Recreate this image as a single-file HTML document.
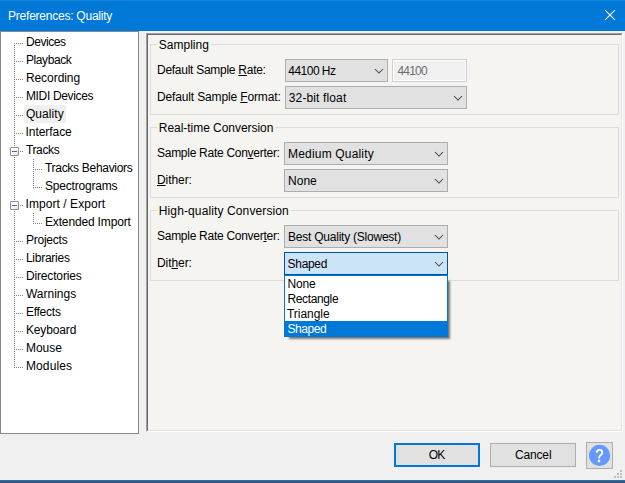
<!DOCTYPE html>
<html>
<head>
<meta charset="utf-8">
<title>Preferences: Quality</title>
<style>
*{box-sizing:border-box;margin:0;padding:0}
html,body{width:625px;height:483px;overflow:hidden;background:#f0f0f0}
body{font-family:"Liberation Sans",sans-serif;font-size:12px;color:#000;position:relative}
.abs{position:absolute}
.t{position:absolute;white-space:nowrap;line-height:16px;height:16px;font-size:12px}
.t u{text-decoration:underline;text-underline-offset:1px}
#title{left:0;top:0;width:625px;height:31px;background:#0078d7}
#tree{left:0;top:31px;width:139px;height:403px;background:#fff;border:1px solid #828790}
#panel{left:146px;top:33px;width:477px;height:399px;background:#f5f4f1;border-top:1px solid #a0a0a0;border-left:1px solid #a0a0a0;border-right:1px solid #fff;border-bottom:1px solid #fff}
#panel:before{content:"";position:absolute;left:0;top:0;right:0;bottom:0;border-top:1px solid #696969;border-left:1px solid #696969;border-right:1px solid #e3e3e3;border-bottom:1px solid #e3e3e3}
.gb{position:absolute;border:1px solid #dcdcdc}
.gbl{position:absolute;background:#f5f4f1;height:5px}
.combo{position:absolute;height:23px;background:#e1e1e1;border:1px solid #adadad}
.combo.act{background:#cce4f7;border-color:#005499}
.chev{position:absolute;right:3px;top:8px}
.btn{position:absolute;background:#e1e1e1;border:1px solid #adadad}
.hd{position:absolute;height:1px;background-image:linear-gradient(to right,#808080 50%,transparent 50%);background-size:2px 1px}
.vd{position:absolute;width:1px;background-image:linear-gradient(to bottom,#808080 50%,transparent 50%);background-size:1px 2px}
.exp{position:absolute;width:9px;height:9px;border:1px solid #919191;background:linear-gradient(135deg,#fff 45%,#dcdcdc);border-radius:1px}
.exp:after{content:"";position:absolute;left:1px;top:3px;width:5px;height:1px;background:#4a62c4}
.grip{position:absolute;width:2px;height:2px;background:#bfbfbf}
</style>
</head>
<body>
<div id="title" class="abs"></div><div class="abs" style="left:0;top:0;width:625px;height:1px;background:#1a84da"></div>
<svg class="abs" style="left:604px;top:9px" width="12" height="12" viewBox="0 0 12 12"><path d="M1.1 1.1 L10.9 10.9 M10.9 1.1 L1.1 10.9" stroke="#fff" stroke-width="1.1" fill="none"/></svg>

<div id="tree" class="abs"></div>
<div class="abs" style="left:24px;top:105px;width:42px;height:18px;background:#f0f0f0"></div>
<div class="vd" style="left:14px;top:43px;height:325px"></div><div class="hd" style="left:16px;top:43px;width:7px"></div><div class="hd" style="left:16px;top:61px;width:7px"></div><div class="hd" style="left:16px;top:79px;width:7px"></div><div class="hd" style="left:16px;top:97px;width:7px"></div><div class="hd" style="left:16px;top:115px;width:7px"></div><div class="hd" style="left:16px;top:133px;width:7px"></div><div class="hd" style="left:16px;top:241px;width:7px"></div><div class="hd" style="left:16px;top:259px;width:7px"></div><div class="hd" style="left:16px;top:277px;width:7px"></div><div class="hd" style="left:16px;top:295px;width:7px"></div><div class="hd" style="left:16px;top:313px;width:7px"></div><div class="hd" style="left:16px;top:331px;width:7px"></div><div class="hd" style="left:16px;top:349px;width:7px"></div><div class="hd" style="left:16px;top:367px;width:7px"></div><div class="hd" style="left:20px;top:151px;width:3px"></div><div class="hd" style="left:20px;top:205px;width:3px"></div><div class="vd" style="left:33px;top:159px;height:29px"></div><div class="hd" style="left:35px;top:169px;width:7px"></div><div class="hd" style="left:35px;top:187px;width:7px"></div><div class="vd" style="left:33px;top:213px;height:11px"></div><div class="hd" style="left:35px;top:223px;width:7px"></div>
<div class="exp" style="left:10px;top:147px"></div><div class="exp" style="left:10px;top:201px"></div>

<div id="panel" class="abs"></div>
<div class="gb" style="left:150px;top:44px;width:469px;height:71px"></div><div class="gbl" style="left:157px;top:42px;width:54px"></div>
<div class="gb" style="left:150px;top:127px;width:469px;height:71px"></div><div class="gbl" style="left:157px;top:125px;width:118px"></div>
<div class="gb" style="left:150px;top:210px;width:469px;height:71px"></div><div class="gbl" style="left:157px;top:208px;width:134px"></div>

<div class="combo " style="left:285px;top:59px;width:103px"><svg class="chev" width="10" height="7" viewBox="0 0 10 7"><path d="M1 1 L5 5 L9 1" stroke="#444" stroke-width="1.05" fill="none"/></svg></div>
<div class="abs" style="left:392px;top:59px;width:75px;height:23px;background:#f0f0f0;border:1px solid #d0d0d0;box-shadow:inset 0 0 0 1px #fff"></div>
<div class="combo " style="left:285px;top:86px;width:182px"><svg class="chev" width="10" height="7" viewBox="0 0 10 7"><path d="M1 1 L5 5 L9 1" stroke="#444" stroke-width="1.05" fill="none"/></svg></div>
<div class="combo " style="left:284px;top:142px;width:164px"><svg class="chev" width="10" height="7" viewBox="0 0 10 7"><path d="M1 1 L5 5 L9 1" stroke="#444" stroke-width="1.05" fill="none"/></svg></div>
<div class="combo " style="left:284px;top:169px;width:164px"><svg class="chev" width="10" height="7" viewBox="0 0 10 7"><path d="M1 1 L5 5 L9 1" stroke="#444" stroke-width="1.05" fill="none"/></svg></div>
<div class="combo " style="left:284px;top:225px;width:164px"><svg class="chev" width="10" height="7" viewBox="0 0 10 7"><path d="M1 1 L5 5 L9 1" stroke="#444" stroke-width="1.05" fill="none"/></svg></div>
<div class="combo act" style="left:284px;top:252px;width:164px"><svg class="chev" width="10" height="7" viewBox="0 0 10 7"><path d="M1 1 L5 5 L9 1" stroke="#444" stroke-width="1.05" fill="none"/></svg></div>

<!-- dropdown list -->
<div class="abs" style="left:290px;top:282px;width:159px;height:56px;background:rgba(0,0,0,.5);box-shadow:0 0 2px 1px rgba(0,0,0,.5)"></div>
<div class="abs" style="left:284px;top:275px;width:164px;height:62px;background:#fff;border:1px solid #0078d7"></div>
<div class="abs" style="left:285px;top:321px;width:162px;height:15px;background:#0078d7"></div>

<!-- buttons -->
<div class="btn" style="left:394px;top:443px;width:86px;height:24px;border:2px solid #0078d7"></div>
<div class="btn" style="left:490px;top:443px;width:86px;height:24px"></div>
<div class="btn" style="left:586px;top:442px;width:27px;height:27px"></div>
<svg class="abs" style="left:586px;top:442px" width="27" height="27" viewBox="586 442 27 27"><circle cx="599.6" cy="455.4" r="10.6" fill="#6699ff"/><path d="M596.7 452.8 C596.7 450.6 598.2 449.9 599.6 449.9 C601.2 449.9 602.3 450.9 602.3 452.4 C602.3 453.8 601.4 454.5 600.4 455.4 C599.4 456.3 599 456.9 599 458.6" stroke="#fff" stroke-width="1.9" fill="none"/><rect x="597.8" y="459.7" width="2.4" height="2.5" fill="#fff"/></svg>

<div class="t" style="left:8.10px;top:8px;letter-spacing:-0.238px;color:#fff">Preferences: Quality</div>
<div class="t" style="left:25.90px;top:34px;letter-spacing:-0.413px">Devices</div>
<div class="t" style="left:25.90px;top:52px;letter-spacing:-0.399px">Playback</div>
<div class="t" style="left:25.90px;top:70px;letter-spacing:-0.053px">Recording</div>
<div class="t" style="left:25.90px;top:88px;letter-spacing:-0.331px">MIDI Devices</div>
<div class="t" style="left:25.90px;top:106px;letter-spacing:0.092px">Quality</div>
<div class="t" style="left:25.60px;top:124px;letter-spacing:-0.065px">Interface</div>
<div class="t" style="left:25.90px;top:142px;letter-spacing:-0.331px">Tracks</div>
<div class="t" style="left:45.00px;top:160px;letter-spacing:-0.297px">Tracks Behaviors</div>
<div class="t" style="left:45.00px;top:178px;letter-spacing:-0.190px">Spectrograms</div>
<div class="t" style="left:25.60px;top:196px;letter-spacing:0.053px">Import / Export</div>
<div class="t" style="left:45.00px;top:214px;letter-spacing:-0.158px">Extended Import</div>
<div class="t" style="left:25.90px;top:232px;letter-spacing:-0.221px">Projects</div>
<div class="t" style="left:25.90px;top:250px;letter-spacing:-0.252px">Libraries</div>
<div class="t" style="left:25.90px;top:268px;letter-spacing:-0.145px">Directories</div>
<div class="t" style="left:25.90px;top:286px;letter-spacing:0.009px">Warnings</div>
<div class="t" style="left:25.90px;top:304px;letter-spacing:-0.244px">Effects</div>
<div class="t" style="left:25.90px;top:322px;letter-spacing:-0.128px">Keyboard</div>
<div class="t" style="left:25.90px;top:340px;letter-spacing:0.014px">Mouse</div>
<div class="t" style="left:25.90px;top:358px;letter-spacing:0.140px">Modules</div>
<div class="t" style="left:158.80px;top:37px;letter-spacing:0.007px">Sampling</div>
<div class="t" style="left:158.80px;top:120px;letter-spacing:-0.042px">Real-time Conversion</div>
<div class="t" style="left:158.80px;top:203px;letter-spacing:0.117px">High-quality Conversion</div>
<div class="t" style="left:157.00px;top:62px;letter-spacing:-0.270px">Default Sample <u>R</u>ate:</div>
<div class="t" style="left:157.00px;top:89px;letter-spacing:-0.142px">Default Sample <u>F</u>ormat:</div>
<div class="t" style="left:157.00px;top:145px;letter-spacing:-0.276px">Sample Rate Con<u>v</u>erter:</div>
<div class="t" style="left:157.00px;top:172px;letter-spacing:-0.068px"><u>D</u>ither:</div>
<div class="t" style="left:157.00px;top:228px;letter-spacing:-0.276px">Sample Rate Conver<u>t</u>er:</div>
<div class="t" style="left:157.00px;top:255px;letter-spacing:-0.068px">Dit<u>h</u>er:</div>
<div class="t" style="left:288.30px;top:63px;letter-spacing:-0.524px">44100 Hz</div>
<div class="t" style="left:397.50px;top:63px;letter-spacing:-0.799px;color:#6d6d6d">44100</div>
<div class="t" style="left:288.80px;top:90px;letter-spacing:0.127px">32-bit float</div>
<div class="t" style="left:288.10px;top:146px;letter-spacing:0.172px">Medium Quality</div>
<div class="t" style="left:288.10px;top:173px;letter-spacing:-0.005px">None</div>
<div class="t" style="left:288.10px;top:229px;letter-spacing:-0.235px">Best Quality (Slowest)</div>
<div class="t" style="left:287.60px;top:256px;letter-spacing:-0.320px">Shaped</div>
<div class="t" style="left:287.50px;top:276px;letter-spacing:-0.171px">None</div>
<div class="t" style="left:287.50px;top:291px;letter-spacing:-0.370px">Rectangle</div>
<div class="t" style="left:287.00px;top:306px;letter-spacing:-0.048px">Triangle</div>
<div class="t" style="left:287.50px;top:321px;letter-spacing:-0.440px;color:#fff">Shaped</div>
<div class="t" style="left:428.70px;top:447px;letter-spacing:-0.834px">OK</div>
<div class="t" style="left:514.90px;top:447px;letter-spacing:-0.138px">Cancel</div>

<div class="grip" style="left:620px;top:470px"></div>
<div class="grip" style="left:617px;top:473px"></div><div class="grip" style="left:620px;top:473px"></div>
<div class="grip" style="left:614px;top:476px"></div><div class="grip" style="left:617px;top:476px"></div><div class="grip" style="left:620px;top:476px"></div>

<div class="abs" style="left:0;top:480px;width:625px;height:1px;background:#0078d7"></div>
<div class="abs" style="left:0;top:481px;width:625px;height:2px;background:#4e5068"></div>
</body>
</html>
